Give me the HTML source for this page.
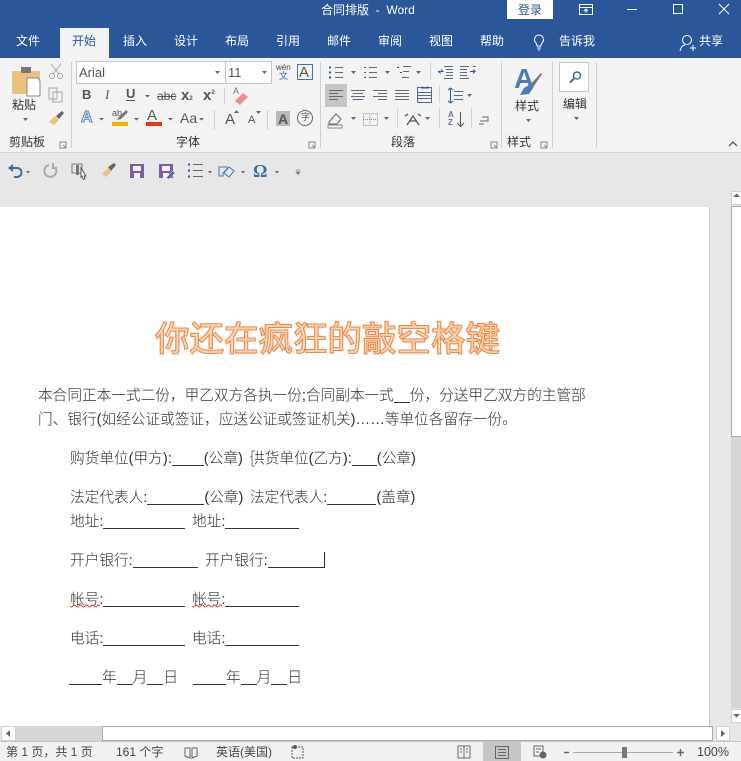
<!DOCTYPE html>
<html><head><meta charset="utf-8">
<style>
html,body{margin:0;padding:0;width:741px;height:761px;overflow:hidden;background:#e6e7e6;font-family:"Liberation Sans","Noto Sans CJK SC",sans-serif;}
.a{position:absolute;white-space:nowrap;line-height:1;}
.r{position:absolute;}
.t{color:#fff;font-size:12px;}
.u{color:#444;font-size:12px;}
.d{color:#2e2e2e;font-size:14.67px;font-weight:300;letter-spacing:0;}
.ln{display:inline-block;border-bottom:1px solid #333;height:1px;vertical-align:baseline;position:relative;top:3px;}
svg{position:absolute;left:0;top:0;}
</style></head><body>
<div class="r" style="left:0;top:0;width:741px;height:58px;background:#2b579a"></div>
<div class="r" style="left:0;top:58px;width:741px;height:95px;background:#f3f3f3"></div>
<div class="r" style="left:0;top:152px;width:741px;height:1px;background:#d4d4d4"></div>
<div class="r" style="left:0;top:153px;width:741px;height:54px;background:#e6e7e6"></div>
<div class="r" style="left:60px;top:28px;width:49px;height:30px;background:#f3f3f3"></div>
<div class="r" style="left:507px;top:0;width:46px;height:19px;background:#fff"></div>

<div class="a t" style="left:321px;top:4px;font-size:12px">合同排版&nbsp; -&nbsp; Word</div>
<div class="a" style="left:518px;top:4px;font-size:12px;color:#2b579a">登录</div>
<div class="a t" style="left:16px;top:35px">文件</div>
<div class="a" style="left:72px;top:35px;font-size:12px;color:#2b579a">开始</div>
<div class="a t" style="left:123px;top:35px">插入</div>
<div class="a t" style="left:174px;top:35px">设计</div>
<div class="a t" style="left:225px;top:35px">布局</div>
<div class="a t" style="left:276px;top:35px">引用</div>
<div class="a t" style="left:327px;top:35px">邮件</div>
<div class="a t" style="left:378px;top:35px">审阅</div>
<div class="a t" style="left:429px;top:35px">视图</div>
<div class="a t" style="left:480px;top:35px">帮助</div>
<div class="a t" style="left:559px;top:35px">告诉我</div>
<div class="a t" style="left:699px;top:35px">共享</div>

<!-- font boxes -->
<div class="r" style="left:76px;top:61px;width:148px;height:21px;background:#fff;border:1px solid #c6c6c6"></div>
<div class="r" style="left:225px;top:61px;width:45px;height:21px;background:#fff;border:1px solid #c6c6c6"></div>
<div class="a" style="left:79px;top:66px;font-size:13px;color:#555">Arial</div>
<div class="a" style="left:228px;top:66px;font-size:13px;color:#555">11</div>
<div class="a" style="left:276px;top:64px;font-size:8px;color:#444">wén</div>
<div class="a" style="left:279px;top:72px;font-size:9px;color:#2b6aa8">文</div>
<div class="r" style="left:297px;top:64px;width:14px;height:14px;border:1px solid #44719f"></div>
<div class="a" style="left:299px;top:65px;font-size:15px;color:#555">A</div>

<div class="a" style="left:82px;top:88px;font-size:13px;font-weight:bold;color:#555">B</div>
<div class="a" style="left:105px;top:88px;font-size:13px;font-style:italic;font-family:'Liberation Serif',serif;color:#555">I</div>
<div class="a" style="left:126px;top:87px;font-size:13px;font-weight:bold;color:#555;border-bottom:1px solid #555">U</div>
<div class="a" style="left:157px;top:90px;font-size:12px;color:#555;text-decoration:line-through">abc</div>
<div class="a" style="left:181px;top:88px;font-size:15px;font-weight:bold;color:#555">x<span style="font-size:6px">2</span></div>
<div class="a" style="left:203px;top:88px;font-size:15px;font-weight:bold;color:#555">x<sup style="font-size:6px;line-height:0">2</sup></div>
<div class="a" style="left:180px;top:111px;font-size:14px;color:#555">Aa</div>
<div class="a" style="left:225px;top:112px;font-size:15px;color:#555">A</div>
<div class="a" style="left:248px;top:115px;font-size:11px;color:#555">A</div>
<div class="r" style="left:276px;top:111px;width:14px;height:15px;background:#b9b9b9"></div>
<div class="a" style="left:278px;top:112px;font-size:14px;font-weight:bold;color:#555">A</div>
<div class="a" style="left:301px;top:113px;font-size:9px;color:#555">字</div>
<div class="a" style="left:147px;top:108px;font-size:15px;color:#555">A</div>
<div class="a" style="left:112px;top:109px;font-size:9px;color:#555">ab</div>
<div class="a" style="left:81px;top:110px;font-size:16px;font-weight:bold;color:#dfe8f5;-webkit-text-stroke:1px #5b86c4">A</div>
<div class="a" style="left:233px;top:87px;font-size:9px;color:#777">A</div>

<div class="a" style="left:12px;top:99px;font-size:12px;color:#333">粘贴</div>
<div class="a" style="left:9px;top:136px;font-size:12px;color:#333">剪贴板</div>
<div class="a" style="left:176px;top:136px;font-size:12px;color:#333">字体</div>
<div class="a" style="left:391px;top:136px;font-size:12px;color:#333">段落</div>
<div class="a" style="left:507px;top:136px;font-size:12px;color:#333">样式</div>
<div class="a" style="left:515px;top:100px;font-size:12px;color:#333">样式</div>
<div class="a" style="left:563px;top:98px;font-size:12px;color:#333">编辑</div>
<div class="r" style="left:325px;top:84px;width:22px;height:23px;background:#c6c6c6"></div>
<div class="r" style="left:559px;top:62px;width:28px;height:28px;background:#fff;border:1px solid #c6c6c6"></div>

<div class="a" style="left:448px;top:111px;font-size:8px;font-weight:bold;color:#8064a2">A</div>
<div class="a" style="left:448px;top:119px;font-size:8px;font-weight:bold;color:#8064a2">Z</div>
<div class="a" style="left:514px;top:65px;font-size:28px;font-weight:bold;color:#4a7db5">A</div>
<div class="a" style="left:253px;top:162px;font-size:18px;font-weight:bold;font-family:'Liberation Serif',serif;color:#3a6ea5">Ω</div>

<svg width="741" height="761" viewBox="0 0 741 761" fill="none">
 <!-- title bar icons -->
 <g stroke="#fff" stroke-width="1">
  <rect x="579.5" y="4.5" width="13" height="10"/><path d="M580 7.5h12M586 13V9M584 11l2-2 2 2"/>
  <path d="M627 9.5h10"/><rect x="673.5" y="4.5" width="9" height="9"/><path d="M719 4l10 10M729 4l-10 10"/>
  <path d="M536 43c-3-3-1-8 3-8s6 5 3 8c-1 1-1 2-1 3h-4c0-1 0-2-1-3zM537 48h4M538 50h2"/>
  <circle cx="687" cy="40" r="4.500"/><path d="M680 51c1-4 3-6 5-6M690 48h6M693 45v6"/>
 </g>
 <!-- separators -->
 <g stroke="#d0d0d0"><path d="M71.500 62v86M320.500 62v86M501.500 62v86M552.500 62v86M596.500 62v86M224.500 88v16M214.500 110v20M267.500 110v20"/></g>
 <g stroke="#d4d4d4"><path d="M430.500 62v18M439.500 85v18M397.500 108v20M439.500 108v20M471.500 108v20"/></g>
 <!-- paste -->
 <path d="M12 71h28v23H12z" fill="#e9c27e"/><path d="M21 67h10v6H21z" fill="#777"/><path d="M27 78h11l2 3v15H27z" fill="#fff" stroke="#8a8a8a"/>
 <!-- cut, copy, painter -->
 <g stroke="#a5a5a5"><path d="M51 64l8 10M61 64l-8 10"/><circle cx="52" cy="76" r="2.500"/><circle cx="60" cy="76" r="2.500"/><path d="M49 88h8v11h-8zM53 92h9v10h-9z" fill="#f3f3f3"/></g>
 <path d="M49 122l6-6 4 4-5 5z" fill="#e9c27e"/><path d="M56 116l6-5 2 2-5 6z" fill="#666"/>
 <!-- arrows -->
 <g fill="#666">
  <path d="M23 118h5l-2.500 3zM215 71h5l-2.500 3zM262 71h5l-2.500 3zM145 95h5l-2.500 2.500zM99 118h5l-2.500 2.500zM134 118h5l-2.500 2.500zM168 118h5l-2.500 2.500zM199 118h5l-2.500 2.500z"/>
  <path d="M351 71h5l-2.500 3zM385 71h5l-2.500 3zM416 71h5l-2.500 3zM467 94h5l-2.500 3zM351 117h5l-2.500 3zM384 117h5l-2.500 3zM425 117h5l-2.500 3z"/>
  <path d="M526 119h5l-2.500 3zM574 117h5l-2.500 3zM26 171h4l-2 2.500zM208 171h4l-2 2.500zM241 171h4l-2 2.500zM275 171h4l-2 2.500z"/>
 </g>
 <!-- grow/shrink triangles -->
 <path d="M234 113h5l-2.500-3zM256 111h5l-2.500 3z" fill="#3a6ea5"/>
 <!-- eraser -->
 <path d="M235 101l8-8 5 4-8 8z" fill="#ef8f88"/>
 <!-- font color -->
 <path d="M112 122h16v4h-16z" fill="#f4b400"/><path d="M146 122h16v4h-16z" fill="#e8341c"/>
 <path d="M117 120l2-3 7-7 2 2-7 7z" fill="#777"/>
 <circle cx="305" cy="118" r="7.500" stroke="#666"/>
 <!-- paragraph lists -->
 <g stroke="#5a6a7a" stroke-width="1">
  <path d="M335 67.500h8M335 72.500h8M335 77.500h8M369 67.500h8M369 72.500h8M369 77.500h8M403 66.500h8M403 71.500h6M403 77.500h6"/>
  <path d="M329 67.500h2M329 72.500h2M329 77.500h2" stroke="#2b579a" stroke-width="2"/>
  <path d="M364 67.500h2M364 72.500h2M364 77.500h2M397 67.500h2M400 72.500h2M402 77.500h1" stroke="#2b579a"/>
  <path d="M444 66.500h9M446 69.500h7M446 72.500h7M446 75.500h7M444 78.500h9M460 66.500h9M460 69.500h7M460 72.500h7M460 75.500h7M460 78.500h9M473 66.500h3"/>
  <path d="M329 90.500h14M329 93.500h9M329 96.500h14M329 99.500h9"/>
  <path d="M351 90.500h14M353 93.500h10M351 96.500h14M353 99.500h10"/>
  <path d="M373 90.500h14M378 93.500h9M373 96.500h14M378 99.500h9"/>
  <path d="M395 90.500h14M395 93.500h14M395 96.500h14M395 99.500h14"/>
  <path d="M417.500 87.500h14v15h-14zM417 92.500h14M417 95.500h14M417 98.500h14"/>
  <path d="M454 91.500h9M454 95.500h9M454 99.500h9"/>
  <path d="M482 117h6v4h-5M484 124h-5M487 121h-7" />
 </g>
 <path d="M438 71.500h5l-2-2M438 71.500l3 2M470 71.500h5l-2-2M475 71.500l-2 2M450.500 88v15M448 90l2.500-2 2.500 2M448 101l2.500 2 2.500-2M421 88h8M421 88l2-1.500M429 88l-2-1.500" stroke="#2b579a" stroke-width="1"/>
 <path d="M460.500 112v14M457 123l3.500 3.500 3.500-3.500" stroke="#555"/>
 <!-- shading / borders -->
 <path d="M329 122l7-8 5 5-4 5h-8z" stroke="#666"/><path d="M328 125h14v3h-14z" stroke="#888"/>
 <path d="M363.500 113.500h14v12h-14zM370 113v12M363 119.500h14" stroke="#888" stroke-dasharray="1 1"/>
 <path d="M407 125l6-9 6 9M410 121h6M405 116l3-2M418 114l3 2" stroke="#555" stroke-width="1.300"/>
 <!-- styles brush -->
 <path d="M527 88l14-15 1 1-10 15z" fill="#777"/><path d="M520 95l4-7 5-3 4 3-4 6z" fill="#4a7db5"/>
 <!-- find -->
 <circle cx="577" cy="75.500" r="3.500" stroke="#3a6ea5" stroke-width="1.500"/><path d="M574 78.500l-4 4" stroke="#666" stroke-width="2"/>
 <!-- launchers, collapse -->
 <g stroke="#888"><path d="M60 142h6v6h-6zM63 145l3 3M309 142h6v6h-6zM312 145l3 3M491 142h6v6h-6zM494 145l3 3M541 142h6v6h-6zM544 145l3 3"/><path d="M729 146l4-4 4 4" stroke="#555" stroke-width="1.300"/></g>
 <!-- QAT -->
 <path d="M10 168h7c6 0 6 9 0 9h-3" stroke="#3a6ea5" stroke-width="2"/><path d="M8 168l5-4v8z" fill="#3a6ea5"/>
 <path d="M49 165a6 6 0 1 0 6 2M53 163v5h4" stroke="#aaa" stroke-width="2"/>
 <path d="M72 164h10v9h-10z" stroke="#777"/><path d="M76 165h3v10h-3z" fill="#777"/><path d="M81 168l5 8-2 0 1 3-2 0-1-3-1 1z" fill="#fff" stroke="#555"/>
 <path d="M102 174l6-6 3 4-5 5z" fill="#e9c27e"/><path d="M108 167l6-4 2 2-5 6z" fill="#666"/>
 <path d="M130 164h14v14h-14z" fill="#7a5fa0"/><path d="M133 166h8v5h-8zM134 173h6v5h-6z" fill="#f1eef6"/>
 <path d="M159 164h14v14h-14z" fill="#7a5fa0"/><path d="M162 166h8v5h-8zM163 173h6v5h-6z" fill="#f1eef6"/><path d="M166 178l7-7 2 2-6 6z" fill="#3a6ea5" stroke="#f1eef6" stroke-width=".5"/>
 <path d="M193 164.500h10M193 170.500h10M193 176.500h10" stroke="#666"/><path d="M188 164.500h2M188 170.500h2M188 176.500h2" stroke="#2b579a" stroke-width="2"/>
 <path d="M219 167h8v2l-4 4v3h-4zM224 173l5-6 5 4-5 6z" stroke="#4a7db5"/><path d="M296 170h4M296 172h4l-2 2.500z" stroke="#777" fill="#777" stroke-width=".7"/>
 <!-- crop marks -->
 <g stroke="#b0b0b0"><path d="M36.500 278v23H13M591.500 278v23H615"/></g>
</svg>

<!-- page -->
<div class="r" style="left:0;top:207px;width:709px;height:519px;background:#fff;border-right:1px solid #c6c6c6"></div>
<div class="a" style="left:155px;top:323px;font-size:34.500px;font-weight:500;color:#fad3b4;-webkit-text-stroke:1.100px #ee8a48;letter-spacing:0">你还在疯狂的敲空格键</div>
<div class="a d" style="left:38px;top:389px">本合同正本一式二份，甲乙双方各执一份;合同副本一式<span class="ln" style="width:16px"></span>份，分送甲乙双方的主管部</div>
<div class="a d" style="left:38px;top:413px">门、银行(如经公证或签证，应送公证或签证机关)……等单位各留存一份。</div>
<div class="a d" style="left:70px;top:452px">购货单位(甲方):<span class="ln" style="width:32px"></span>(公章)</div>
<div class="a d" style="left:250px;top:452px">供货单位(乙方):<span class="ln" style="width:25px"></span>(公章)</div>
<div class="a d" style="left:70px;top:491px">法定代表人:<span class="ln" style="width:57px"></span>(公章)</div>
<div class="a d" style="left:250px;top:491px">法定代表人:<span class="ln" style="width:49px"></span>(盖章)</div>
<div class="a d" style="left:70px;top:515px">地址:<span class="ln" style="width:82px"></span></div>
<div class="a d" style="left:192px;top:515px">地址:<span class="ln" style="width:74px"></span></div>
<div class="a d" style="left:70px;top:554px">开户银行:<span class="ln" style="width:65px"></span></div>
<div class="a d" style="left:205px;top:554px">开户银行:<span class="ln" style="width:57px"></span></div>
<div class="a d" style="left:70px;top:593px">帐号:<span class="ln" style="width:82px"></span></div>
<div class="a d" style="left:192px;top:593px">帐号:<span class="ln" style="width:74px"></span></div>
<div class="a d" style="left:70px;top:632px">电话:<span class="ln" style="width:82px"></span></div>
<div class="a d" style="left:192px;top:632px">电话:<span class="ln" style="width:74px"></span></div>
<div class="a d" style="left:69px;top:671px"><span class="ln" style="width:33px"></span>年<span class="ln" style="width:16px"></span>月<span class="ln" style="width:16px"></span>日</div>
<div class="a d" style="left:193px;top:671px"><span class="ln" style="width:33px"></span>年<span class="ln" style="width:16px"></span>月<span class="ln" style="width:16px"></span>日</div>
<svg width="741" height="761" style="pointer-events:none">
 <path d="M70 606q1.500 2 3 0t3 0 3 0 3 0 3 0 3 0 3 0 3 0 3 0 3 0" stroke="#d9342a" fill="none"/>
 <path d="M192 606q1.500 2 3 0t3 0 3 0 3 0 3 0 3 0 3 0 3 0 3 0 3 0" stroke="#d9342a" fill="none"/>
 <path d="M324.500 552v16" stroke="#222"/>
 <path d="M255 451h-3v15h3" stroke="#777" fill="#fff"/>
</svg>

<!-- v scrollbar -->
<div class="r" style="left:731px;top:191px;width:10px;height:14px;background:#fff;border:1px solid #d0d0d0;border-right:0;box-sizing:border-box"></div>
<div class="r" style="left:731px;top:206px;width:10px;height:231px;background:#fff;border:1px solid #ababab;border-right:0;box-sizing:border-box"></div>
<div class="r" style="left:731px;top:437px;width:10px;height:271px;background:#d6d6d6"></div>
<div class="r" style="left:731px;top:709px;width:10px;height:14px;background:#fff;border:1px solid #d0d0d0;border-right:0;box-sizing:border-box"></div>
<!-- h scrollbar -->
<div class="r" style="left:0;top:726px;width:741px;height:16px;background:#e6e7e6"></div>
<div class="r" style="left:1px;top:726px;width:15px;height:15px;background:#fff;border:1px solid #d0d0d0;box-sizing:border-box"></div>
<div class="r" style="left:16px;top:726px;width:86px;height:15px;background:#d6d6d6"></div>
<div class="r" style="left:102px;top:726px;width:611px;height:15px;background:#fff;border:1px solid #ababab;box-sizing:border-box"></div>
<div class="r" style="left:716px;top:726px;width:14px;height:15px;background:#fff;border:1px solid #d0d0d0;box-sizing:border-box"></div>
<!-- status -->
<div class="r" style="left:0;top:741px;width:741px;height:20px;background:#f1f1f1;border-top:1px solid #c6c6c6;box-sizing:border-box"></div>
<div class="r" style="left:483px;top:742px;width:38px;height:19px;background:#c6c6c6"></div>
<div class="a u" style="left:6px;top:746px">第 1 页，共 1 页</div>
<div class="a u" style="left:116px;top:746px">161 个字</div>
<div class="a u" style="left:216px;top:746px">英语(美国)</div>
<div class="a u" style="left:697px;top:746px;font-size:12.500px">100%</div>
<svg width="741" height="761" fill="none">
 <path d="M10 730v7l-4-3.500zM721 730v7l4-3.500z" fill="#666"/>
 <path d="M733 197h7l-3.500-3.500zM733 714h7l-3.500 3.500z" fill="#666"/>
 <g stroke="#666"><path d="M185 748h5v10l-5-2zM192 748h5v8l-5 2z"/><path d="M458 746h6v12h-6zM464 746h6v12h-6zM460 749h2M460 752h2M466 749h2M466 752h2"/><path d="M495.500 746.500h13v12h-13zM498 749.500h8M498 752.500h8M498 755.500h8"/><path d="M534 746h9v10h-9zM536 749h5M536 752h3"/><circle cx="543" cy="755" r="3" fill="#666"/></g>
 <path d="M292 747h11v11h-11z" stroke="#555" stroke-dasharray="2 1"/><circle cx="295" cy="747" r="2" fill="#555"/>
 <path d="M564 752.500h5M677 752.500h7M680.500 749v7" stroke="#666" stroke-width="1.500"/><path d="M573 752.500h100" stroke="#aaa"/><path d="M622 747h5v11h-5z" fill="#777"/>
</svg>
</body></html>
